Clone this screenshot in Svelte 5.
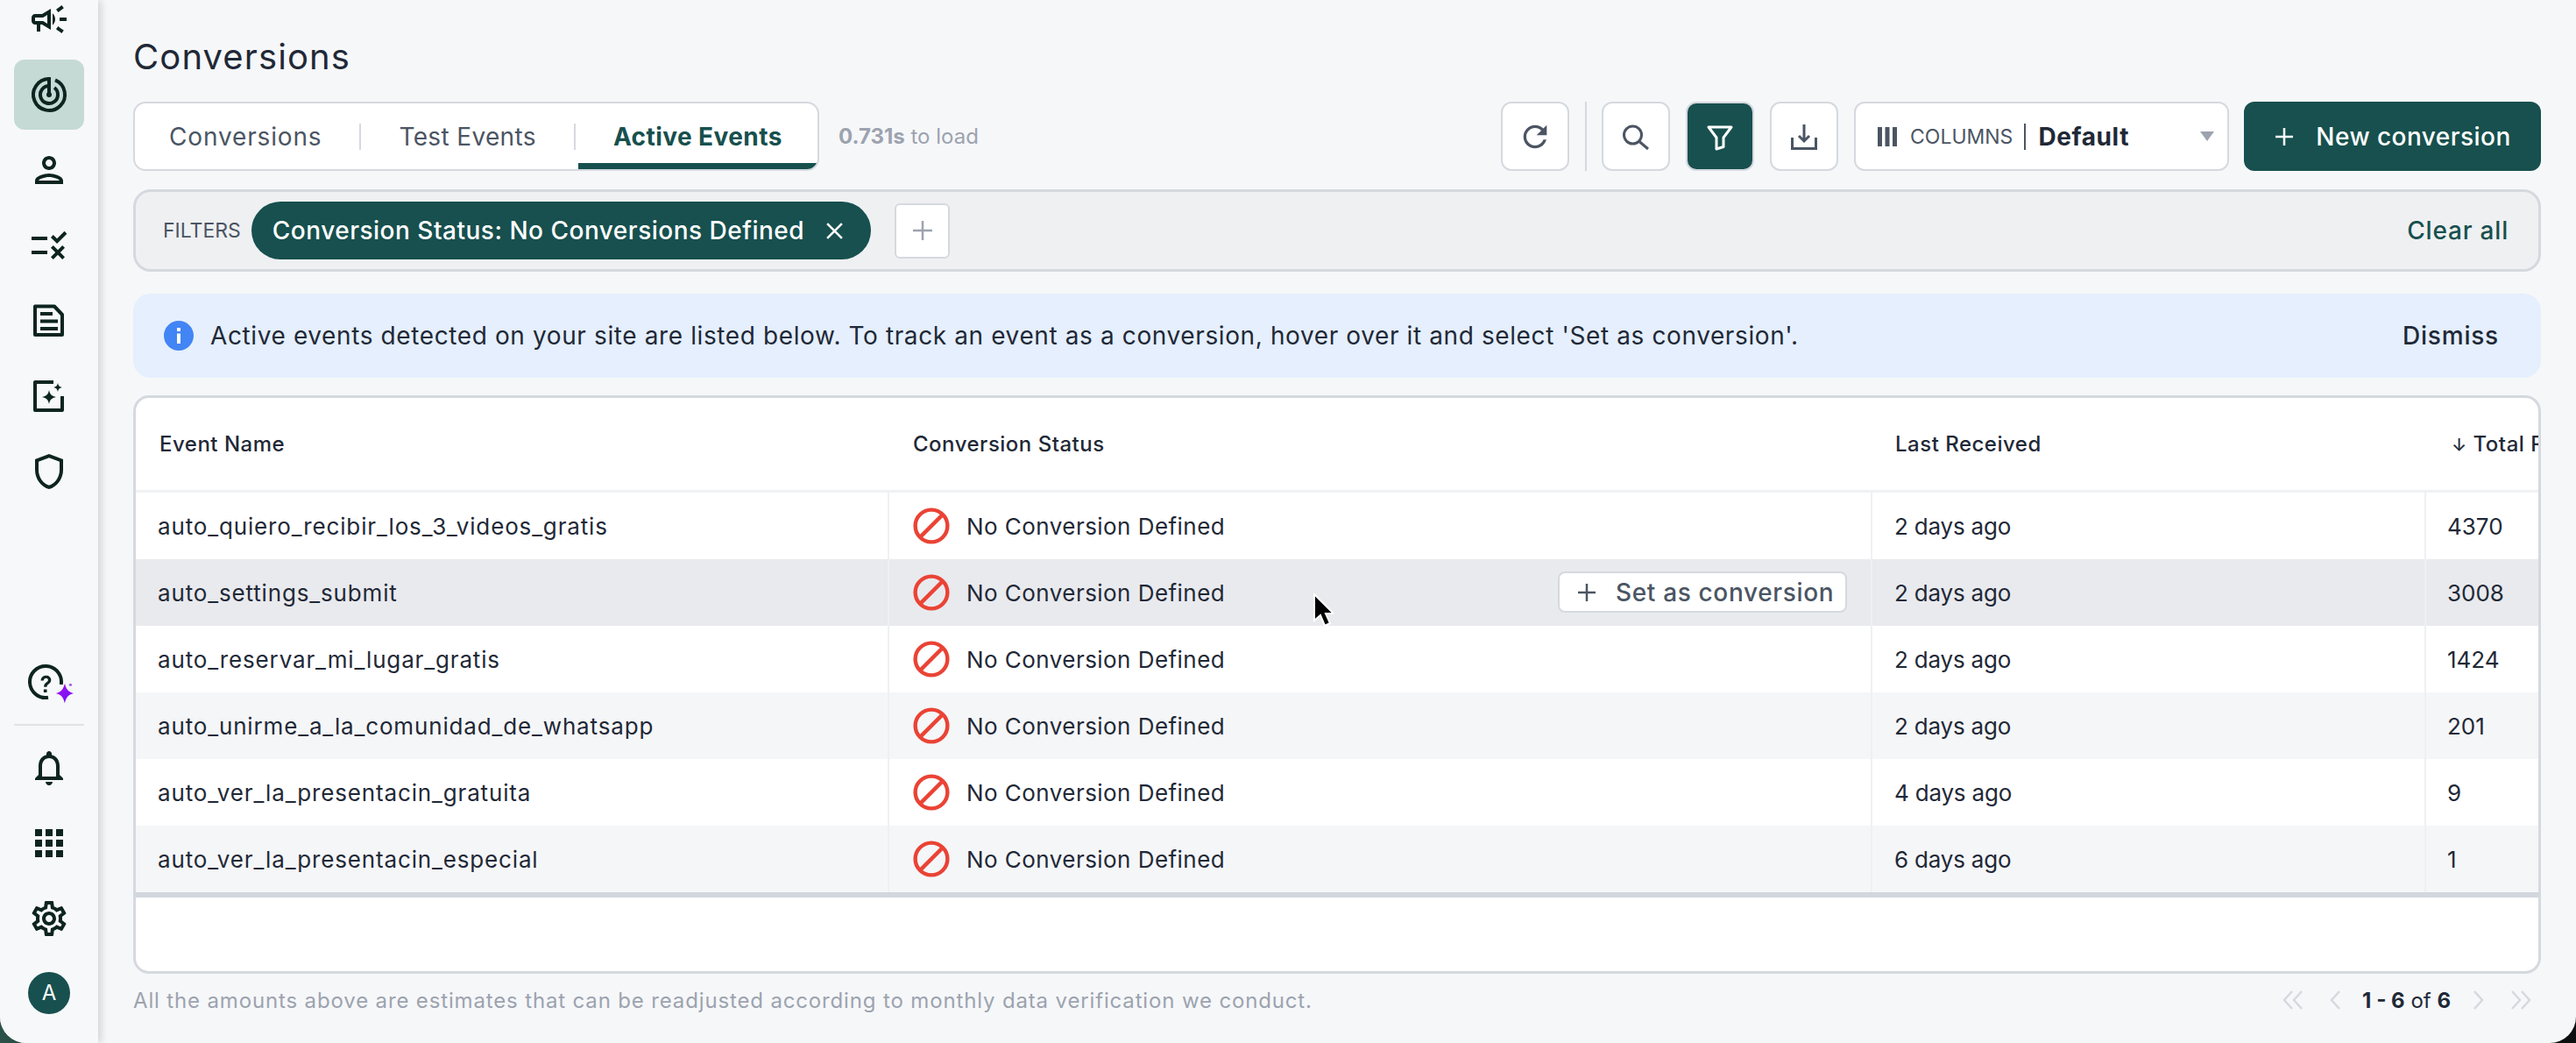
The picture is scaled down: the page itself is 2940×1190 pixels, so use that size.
<script lang="ts">
	const rows = [
		{ name: 'auto_quiero_recibir_los_3_videos_gratis', received: '2 days ago', total: '4370' },
		{ name: 'auto_settings_submit', received: '2 days ago', total: '3008' },
		{ name: 'auto_reservar_mi_lugar_gratis', received: '2 days ago', total: '1424' },
		{ name: 'auto_unirme_a_la_comunidad_de_whatsapp', received: '2 days ago', total: '201' },
		{ name: 'auto_ver_la_presentacin_gratuita', received: '4 days ago', total: '9' },
		{ name: 'auto_ver_la_presentacin_especial', received: '6 days ago', total: '1' }
	];
	const HOVER_ROW = 1;
</script>

<div class="shell">
	<aside class="sidebar">
		<nav class="nav-top">
			<div class="nav-item"><svg viewBox="0 0 24 24" class="nav-icon"><path d="M18 11v2h4v-2h-4zm-2 6.61c.96.71 2.21 1.65 3.2 2.39.4-.53.8-1.07 1.2-1.6-.99-.74-2.24-1.68-3.2-2.4-.4.54-.8 1.08-1.2 1.61zM20.4 5.6c-.4-.53-.8-1.07-1.2-1.6-.99.74-2.24 1.68-3.2 2.4.4.53.8 1.07 1.2 1.6.96-.72 2.21-1.65 3.2-2.4zM4 9c-1.1 0-2 .9-2 2v2c0 1.1.9 2 2 2h1v4h2v-4h1l5 3V6L8 9H4zm5.03 1.71L11 9.53v4.94l-1.97-1.18-.48-.29H4v-2h4.55l.48-.29zM15.5 12c0-1.33-.58-2.53-1.5-3.35v6.69c.92-.81 1.5-2.01 1.5-3.34z" /></svg></div>
			<div class="nav-item active">
				<svg viewBox="0 0 48 48" class="nav-icon stroked" stroke-width="4">
					<path d="M24 6A18 18 0 1 0 31 7.400" />
					<path d="M24 14A10 10 0 1 0 30 16" />
					<path d="M24 4v20" />
					<circle cx="24" cy="24" r="3" class="dot" />
				</svg>
			</div>
			<div class="nav-item"><svg viewBox="0 0 24 24" class="nav-icon"><path d="M12 6c1.1 0 2 .9 2 2s-.9 2-2 2-2-.9-2-2 .9-2 2-2m0 10c2.7 0 5.8 1.29 6 2H6c.23-.72 3.31-2 6-2m0-12C9.79 4 8 5.79 8 8s1.79 4 4 4 4-1.79 4-4-1.79-4-4-4zm0 10c-2.67 0-8 1.34-8 4v2h16v-2c0-2.66-5.33-4-8-4z" /></svg></div>
			<div class="nav-item"><svg viewBox="0 0 24 24" class="nav-icon"><path d="M16.54 11 13 7.46l1.41-1.41 2.12 2.12 4.24-4.24 1.41 1.41L16.54 11zM11 7H2v2h9V7zm10 6.41L19.59 12 17 14.59 14.41 12 13 13.41 15.59 16 13 18.59 14.41 20 17 17.41 19.59 20 21 18.59 18.41 16 21 13.41zM11 15H2v2h9v-2z" /></svg></div>
			<div class="nav-item">
				<svg viewBox="0 0 48 48" class="nav-icon stroked" stroke-width="4">
					<path d="M8 7.500h22L39 17v23H8z" stroke-linejoin="round" />
					<path d="M14 16h14M14 24.500h20M14 33h20" />
				</svg>
			</div>
			<div class="nav-item">
				<svg viewBox="0 0 48 48" class="nav-icon">
					<path class="stroked" stroke-width="4" d="M29 8H8v32h31V24" stroke-linejoin="round" />
					<path d="M24 17c1 5 3 7 8 8-5 1-7 3-8 8-1-5-3-7-8-8 5-1 7-3 8-8zM34 9c.7 3.200 1.800 4.300 5 5-3.200.7-4.300 1.800-5 5-.7-3.200-1.800-4.300-5-5 3.200-.7 4.300-1.800 5-5z" />
				</svg>
			</div>
			<div class="nav-item"><svg viewBox="0 0 24 24" class="nav-icon"><path d="M12 2 4 5v6.090c0 5.050 3.410 9.760 8 10.910 4.590-1.150 8-5.860 8-10.910V5l-8-3zm6 9.090c0 4-2.550 7.700-6 8.830-3.450-1.130-6-4.820-6-8.830v-4.700l6-2.250 6 2.250v4.700z" /></svg></div>
		</nav>

		<div class="nav-bottom">
			<div class="help">
				<svg viewBox="0 0 48 48" class="nav-icon">
					<path class="stroked" stroke-width="4" d="M27 41.750A18 18 0 1 1 41.750 27" />
					<path transform="translate(0 3)" d="M18.500 19.500c.4-3.600 2.900-5.700 6-5.700 3.400 0 5.800 2.100 5.800 5 0 2.200-1 3.300-2.800 4.600-1.500 1.100-2 1.800-2 3.400h-3.400c0-2.700.8-3.900 2.900-5.400 1.400-1 1.900-1.600 1.900-2.600 0-1.200-1-2.100-2.400-2.100s-2.400 1-2.700 2.800zM21.900 29.500h3.600v3.600h-3.600z" />
				</svg>
				<svg viewBox="0 0 24 24" class="spark">
					<defs>
						<linearGradient id="sparkGrad" x1="0" y1="0" x2="1" y2="1">
							<stop offset="0" stop-color="#a813f0" />
							<stop offset="1" stop-color="#6a12f5" />
						</linearGradient>
					</defs>
					<path fill="url(#sparkGrad)" d="M11 1.500c1.500 6 3.500 9 9.500 10.500-6 1.500-8 4.500-9.500 10.500-1.500-6-3.500-9-9.500-10.500 6-1.500 8-4.500 9.500-10.500z" />
					<circle cx="17" cy="3" r="1.500" fill="#a060f0" />
				</svg>
			</div>
			<div class="nav-divider"></div>
			<div class="nav-item"><svg viewBox="0 0 24 24" class="nav-icon"><path d="M12 22c1.100 0 2-.9 2-2h-4c0 1.100.9 2 2 2zm6-6v-5c0-3.070-1.630-5.640-4.500-6.320V4c0-.83-.67-1.500-1.500-1.500s-1.500.67-1.500 1.500v.68C7.640 5.360 6 7.920 6 11v5l-2 2v1h16v-1l-2-2zm-2 1H8v-6c0-2.480 1.510-4.500 4-4.500s4 2.020 4 4.500v6z" /></svg></div>
			<div class="nav-item"><svg viewBox="0 0 24 24" class="nav-icon"><path d="M4 8h4V4H4v4zm6 12h4v-4h-4v4zm-6 0h4v-4H4v4zm0-6h4v-4H4v4zm6 0h4v-4h-4v4zm6-10v4h4V4h-4zm-6 4h4V4h-4v4zm6 6h4v-4h-4v4zm0 6h4v-4h-4v4z" /></svg></div>
			<div class="nav-item"><svg viewBox="0 0 24 24" class="nav-icon"><path d="M19.430 12.980c.04-.32.07-.64.07-.98 0-.34-.03-.66-.07-.98l2.110-1.650c.19-.15.24-.42.12-.64l-2-3.460c-.09-.16-.26-.25-.44-.25-.06 0-.12.01-.17.03l-2.490 1c-.52-.4-1.080-.73-1.690-.98l-.38-2.650C14.460 2.180 14.250 2 14 2h-4c-.25 0-.46.18-.49.42l-.38 2.650c-.61.25-1.170.59-1.690.98l-2.490-1c-.06-.02-.12-.03-.18-.03-.17 0-.34.09-.43.25l-2 3.460c-.13.22-.07.49.12.64l2.110 1.650c-.04.32-.07.65-.07.98 0 .33.03.66.07.98l-2.110 1.650c-.19.15-.24.42-.12.64l2 3.460c.09.16.26.25.44.25.06 0 .12-.01.17-.03l2.490-1c.52.4 1.080.73 1.690.98l.38 2.650c.03.24.24.42.49.42h4c.25 0 .46-.18.49-.42l.38-2.650c.61-.25 1.170-.59 1.690-.98l2.490 1c.06.02.12.03.18.03.17 0 .34-.09.43-.25l2-3.460c.12-.22.07-.49-.12-.64l-2.110-1.650zm-1.980-1.710c.04.31.05.52.05.73 0 .21-.02.43-.05.73l-.14 1.130.89.7 1.080.84-.7 1.210-1.270-.51-1.040-.42-.9.68c-.43.32-.84.56-1.250.73l-1.060.43-.16 1.130-.2 1.350h-1.400l-.19-1.350-.16-1.130-1.060-.43c-.43-.18-.83-.41-1.230-.71l-.91-.7-1.060.43-1.270.51-.7-1.210 1.080-.84.89-.7-.14-1.130c-.03-.31-.05-.54-.05-.74s.02-.43.05-.73l.14-1.130-.89-.7-1.080-.84.7-1.210 1.270.51 1.040.42.9-.68c.43-.32.84-.56 1.250-.73l1.060-.43.16-1.130.2-1.350h1.390l.19 1.350.16 1.130 1.060.43c.43.18.83.41 1.230.71l.91.7 1.060-.43 1.270-.51.7 1.210-1.070.85-.89.7.14 1.130zM12 8c-2.210 0-4 1.790-4 4s1.790 4 4 4 4-1.790 4-4-1.790-4-4-4zm0 6c-1.100 0-2-.9-2-2s.9-2 2-2 2 .9 2 2-.9 2-2 2z" /></svg></div>
			<div class="avatar">A</div>
		</div>
	</aside>

	<main class="content">
		<h1 class="title">Conversions</h1>

		<div class="toolbar">
			<div class="tabs">
				<span class="tab tab-first">Conversions</span>
				<span class="tab-sep"></span>
				<span class="tab tab-second">Test Events</span>
				<span class="tab-sep"></span>
				<span class="tab tab-active">Active Events</span>
			</div>
			<span class="load-time"><b>0.731s</b> to load</span>
			<div class="spacer"></div>
			<button class="tool-btn">
				<svg viewBox="0 0 24 24" class="refresh"><path d="M17.650 6.350C16.200 4.900 14.210 4 12 4c-4.420 0-7.990 3.580-7.990 8s3.570 8 7.990 8c3.730 0 6.840-2.550 7.730-6h-2.080c-.82 2.330-3.040 4-5.650 4-3.310 0-6-2.690-6-6s2.690-6 6-6c1.660 0 3.140.69 4.220 1.780L13 11h7V4l-2.350 2.350z" /></svg>
			</button>
			<span class="tool-sep"></span>
			<button class="tool-btn">
				<svg viewBox="0 0 36 36" class="tool-icon"><circle cx="14.500" cy="16" r="10" /><path d="m22 23.500 10 8.500" /></svg>
			</button>
			<button class="tool-btn on">
				<svg viewBox="0 0 36 36" class="tool-icon"><path d="M5 7h26L22 19v10.500L14 32V19z" stroke-linejoin="round" /></svg>
			</button>
			<button class="tool-btn">
				<svg viewBox="0 0 36 36" class="tool-icon"><path d="M18 4v19M12 17l6 6 6-6M4.500 19v12.500h27V19" /></svg>
			</button>
			<div class="columns-select">
				<svg viewBox="0 0 28 28" class="bars"><path d="M3 3h5v22H3zM11.500 3h5v22h-5zM20 3h5v22h-5z" /></svg>
				<span class="columns-label">COLUMNS</span>
				<span class="columns-bar"></span>
				<span class="columns-value">Default</span>
				<span class="caret"></span>
			</div>
			<button class="primary-btn">
				<svg viewBox="0 0 24 24" class="plus"><path d="M12 2v20M2 12h20" /></svg>
				New conversion
			</button>
		</div>

		<div class="filters">
			<span class="filters-label">FILTERS</span>
			<span class="pill">
				Conversion Status: No Conversions Defined
				<svg viewBox="0 0 20 20" class="pill-x"><path d="m2 2 16 16M18 2 2 18" /></svg>
			</span>
			<button class="add-filter"><svg viewBox="0 0 24 24" class="plus"><path d="M12 1v22M1 12h22" /></svg></button>
			<div class="spacer"></div>
			<span class="clear-all">Clear all</span>
		</div>

		<div class="banner">
			<svg viewBox="0 0 34 34" class="info"><circle cx="17" cy="17" r="17" fill="#4285f4" /><path d="M15 14.500h4V26h-4zM15 8h4v4h-4z" fill="#fff" /></svg>
			<span class="banner-text">Active events detected on your site are listed below. To track an event as a conversion, hover over it and select 'Set as conversion'.</span>
			<div class="spacer"></div>
			<span class="dismiss">Dismiss</span>
		</div>

		<div class="table">
			<div class="thead">
				<div class="th th-name">Event Name</div>
				<div class="th th-status">Conversion Status</div>
				<div class="th">Last Received</div>
				<div class="th th-total"><span class="sort">↓</span> Total Responses</div>
			</div>
			{#each rows as row, i}
				<div class="tr" class:alt={i % 2 === 1} class:hover={i === HOVER_ROW}>
					<div class="td td-name">{row.name}</div>
					<div class="td status">
						<svg viewBox="0 0 40 40" class="no-icon"><circle cx="20" cy="20" r="17.500" /><path d="M8 32 32 8" /></svg>
						<span class="status-text">No Conversion Defined</span>
						{#if i === HOVER_ROW}
							<button class="set-btn">
								<svg viewBox="0 0 24 24" class="plus"><path d="M12 2v20M2 12h20" /></svg>
								Set as conversion
							</button>
						{/if}
					</div>
					<div class="td td-received">{row.received}</div>
					<div class="td td-total">{row.total}</div>
				</div>
			{/each}
			<div class="tfoot-line"></div>
		</div>

		<div class="footer">
			<span class="note">All the amounts above are estimates that can be readjusted according to monthly data verification we conduct.</span>
			<div class="spacer"></div>
			<svg viewBox="0 0 24 24" class="chev first"><path d="M11 2 2 12l9 10M22 2l-9 10 9 10" /></svg>
			<svg viewBox="0 0 24 24" class="chev prev"><path d="M17 2l-9 10 9 10" /></svg>
			<span class="range"><b>1 - 6</b> of <b>6</b></span>
			<svg viewBox="0 0 24 24" class="chev next"><path d="m7 2 9 10-9 10" /></svg>
			<svg viewBox="0 0 24 24" class="chev last"><path d="m2 2 9 10-9 10M13 2l9 10-9 10" /></svg>
		</div>

		<svg viewBox="0 0 24 40" class="cursor"><path d="M2 1v30l7-6 5 12 6-3-5-11h9z" fill="#000" stroke="#fff" stroke-width="2" /></svg>
	</main>
</div>

<style>
	:global(body) {
		margin: 0;
		background: linear-gradient(90deg, #2c5249 0, #1a2a27 6%, #0d0f0f 100%);
	}

	.shell {
		display: flex;
		position: relative;
		width: 2940px;
		height: 1190px;
		overflow: hidden;
		border-radius: 0 0 30px 30px;
		background: #f6f7f9;
		font-family: Inter, 'Liberation Sans', sans-serif;
		color: #1f2937;
	}

	/* Sidebar */
	.sidebar {
		flex: 0 0 112px;
		display: flex;
		flex-direction: column;
		justify-content: space-between;
		background: #f7f8fa;
		box-shadow: 4px 0 8px rgba(0, 0, 0, 0.13);
		z-index: 1;
		padding-bottom: 33px;
		box-sizing: border-box;
	}

	.nav-top {
		display: flex;
		flex-direction: column;
		align-items: center;
		gap: 6px;
		margin-top: -18px;
	}

	.nav-bottom {
		display: flex;
		flex-direction: column;
		align-items: center;
		gap: 6px;
	}

	.nav-item {
		width: 80px;
		height: 80px;
		display: flex;
		align-items: center;
		justify-content: center;
		border-radius: 12px;
	}

	.nav-item.active {
		background: #c5dad5;
	}

	.nav-icon {
		width: 48px;
		height: 48px;
		fill: #0d2420;
	}

	.stroked {
		fill: none;
		stroke: #0d2420;
	}

	.dot {
		fill: #0d2420;
		stroke: none;
	}

	.help {
		position: relative;
		width: 80px;
		height: 60px;
		display: flex;
		align-items: center;
		justify-content: center;
		margin-left: -8px;
	}

	.spark {
		position: absolute;
		left: 50px;
		top: 30px;
		width: 26px;
		height: 26px;
	}

	.nav-divider {
		width: 80px;
		height: 2px;
		background: #e0e2e5;
		margin: 12px 0 2px;
	}

	.avatar {
		width: 48px;
		height: 48px;
		margin-top: 15px;
		border-radius: 50%;
		background: #17504e;
		color: #fff;
		font-size: 24px;
		line-height: 48px;
		text-align: center;
	}

	/* Main */
	.content {
		position: relative;
		flex: 1;
		min-width: 0;
		padding: 0 40px;
		box-sizing: border-box;
	}

	.title {
		margin: 0;
		height: 116px;
		padding-top: 44px;
		box-sizing: border-box;
		font-size: 40px;
		font-weight: 400;
		line-height: 42px;
		letter-spacing: 1.1px;
		color: #1f2937;
	}

	.spacer {
		flex: 1;
	}

	.toolbar {
		display: flex;
		align-items: stretch;
		height: 79px;
	}

	.tabs {
		display: flex;
		align-items: center;
		width: 783px;
		box-sizing: border-box;
		background: #fff;
		border: 2px solid #d5d9df;
		border-radius: 14px;
		position: relative;
		overflow: hidden;
		font-size: 28px;
		color: #4b5563;
	}

	.tab-first {
		margin-left: 39px;
		letter-spacing: 0.85px;
	}

	.tab-second {
		letter-spacing: 0.35px;
	}

	.tab-sep {
		width: 2px;
		height: 30px;
		background: #d5d9df;
		margin: 0 43px;
	}

	.tab-active {
		font-weight: 700;
		color: #17504e;
		letter-spacing: 0.43px;
	}

	.tabs::after {
		content: '';
		position: absolute;
		left: 506px;
		right: 0;
		bottom: 0;
		height: 7px;
		background: #17504e;
	}

	.load-time {
		align-self: center;
		margin-left: 22px;
		font-size: 24px;
		color: #9ca3af;
	}

	.tool-btn {
		width: 78px;
		padding: 0;
		display: flex;
		align-items: center;
		justify-content: center;
		background: #fff;
		border: 2px solid #d5d9df;
		border-radius: 12px;
		margin-right: 18px;
	}

	.tool-btn.on {
		background: #17504e;
	}

	.tool-icon {
		width: 36px;
		height: 36px;
		fill: none;
		stroke: #4b5563;
		stroke-width: 3;
	}

	.refresh {
		width: 40px;
		height: 40px;
		fill: #4b5563;
	}

	.tool-btn.on .tool-icon {
		stroke: #fff;
	}

	.tool-sep {
		width: 2px;
		background: #d5d9df;
		margin-right: 17px;
	}

	.columns-select {
		display: flex;
		align-items: center;
		width: 428px;
		box-sizing: border-box;
		background: #fff;
		border: 2px solid #d5d9df;
		border-radius: 12px;
		padding: 0 15px 0 22px;
	}

	.bars {
		width: 28px;
		height: 28px;
		fill: #4b5563;
	}

	.columns-label {
		margin-left: 12px;
		font-size: 23px;
		color: #4b5563;
	}

	.columns-bar {
		width: 2px;
		height: 30px;
		margin: 0 14px 0 13px;
		background: #4b5563;
	}

	.columns-value {
		font-size: 28px;
		font-weight: 700;
		letter-spacing: 0.6px;
		color: #1f2937;
	}

	.caret {
		margin-left: auto;
		border: 8px solid transparent;
		border-top: 11px solid #9ca3af;
		border-bottom: 0;
	}

	.primary-btn {
		width: 339px;
		margin-left: 17px;
		display: flex;
		align-items: center;
		justify-content: center;
		gap: 24px;
		padding: 0;
		background: #17504e;
		border: 0;
		border-radius: 12px;
		color: #fff;
		font-family: inherit;
		font-size: 28px;
		font-weight: 500;
		letter-spacing: 0.45px;
	}

	.plus {
		width: 24px;
		height: 24px;
		fill: none;
		stroke: currentColor;
		stroke-width: 2.5;
	}

	.filters {
		display: flex;
		align-items: center;
		height: 94px;
		margin-top: 21px;
		padding: 0 34px 0 31px;
		box-sizing: border-box;
		background: #eff0f2;
		border: 3px solid #d5d9df;
		border-radius: 20px;
	}

	.filters-label {
		font-size: 23px;
		color: #4b5563;
	}

	.pill {
		display: flex;
		align-items: center;
		height: 66px;
		margin-left: 12px;
		padding: 0 31px 0 24px;
		border-radius: 33px;
		background: #17504e;
		color: #fff;
		font-size: 28px;
		font-weight: 500;
		letter-spacing: 0.5px;
		white-space: nowrap;
	}

	.pill-x {
		width: 21px;
		height: 21px;
		margin-left: 24px;
		fill: none;
		stroke: #fff;
		stroke-width: 2.5;
	}

	.add-filter {
		width: 63px;
		height: 63px;
		margin-left: 27px;
		padding: 0;
		display: flex;
		align-items: center;
		justify-content: center;
		background: #fff;
		border: 2px solid #d5d9df;
		border-radius: 6px;
		color: #9ca3af;
	}

	.clear-all {
		font-size: 28px;
		font-weight: 500;
		letter-spacing: 0.8px;
		color: #17504e;
	}

	.banner {
		display: flex;
		align-items: center;
		height: 96px;
		margin-top: 25px;
		padding: 0 48px 0 35px;
		background: #e5effd;
		border-radius: 20px;
		font-size: 28px;
		letter-spacing: 0.61px;
		color: #1f2937;
	}

	.info {
		width: 34px;
		height: 34px;
		margin-right: 19px;
	}

	.dismiss {
		font-weight: 500;
		letter-spacing: 0.8px;
	}

	/* Table */
	.table {
		height: 660px;
		margin-top: 20px;
		box-sizing: border-box;
		background: #fff;
		border: 3px solid #d5d9df;
		border-radius: 18px;
		overflow: hidden;
	}

	.thead,
	.tr {
		display: grid;
		grid-template-columns: 858px 1122px 632px 300px;
	}

	.thead {
		height: 108px;
		align-items: center;
		border-bottom: 3px solid #f0f1f3;
		box-sizing: border-box;
	}

	.th {
		padding-left: 28px;
		font-size: 24px;
		color: #1f2937;
		white-space: nowrap;
		font-weight: 500;
		letter-spacing: 0.5px;
	}

	.th-name {
		padding-left: 27px;
	}

	.th-status {
		padding-left: 29px;
	}

	.th-total {
		padding-left: 31px;
	}

	.sort {
		font-size: 20px;
	}

	.tr {
		height: 76px;
		font-size: 26px;
		color: #1f2937;
	}

	.tr.alt {
		background: #f5f6f8;
	}

	.tr.hover {
		background: #e9eaee;
	}

	.td {
		display: flex;
		align-items: center;
		padding-left: 27px;
		border-left: 2px solid #eff0f2;
		box-sizing: border-box;
		white-space: nowrap;
	}

	.td-name {
		padding-left: 25px;
		border-left: 0;
		letter-spacing: 0.85px;
	}

	.td-received {
		padding-left: 25px;
		letter-spacing: -0.2px;
	}

	.td-total {
		padding-left: 24px;
	}

	.status {
		position: relative;
	}

	.status-text {
		letter-spacing: 0.45px;
	}

	.no-icon {
		width: 42px;
		height: 42px;
		margin-right: 19px;
		fill: none;
		stroke: #ea4335;
		stroke-width: 4.2;
	}

	.set-btn {
		position: absolute;
		right: 27px;
		top: 14px;
		width: 330px;
		height: 47px;
		display: flex;
		align-items: center;
		gap: 21px;
		padding: 0 0 0 19px;
		background: #fff;
		border: 2px solid #d5d9df;
		border-radius: 8px;
		color: #4b5563;
		font-family: inherit;
		font-size: 28px;
		font-weight: 500;
		letter-spacing: 0.65px;
		white-space: nowrap;
	}

	.tfoot-line {
		height: 6px;
		background: #d2d7de;
	}

	.footer {
		display: flex;
		align-items: center;
		height: 58px;
		padding-top: 2px;
		box-sizing: border-box;
	}

	.note {
		font-size: 24px;
		letter-spacing: 0.85px;
		color: #9ca3af;
	}

	.range {
		font-size: 24px;
		color: #1f2937;
		margin: 0 20px 0 19px;
	}

	.chev {
		width: 24px;
		height: 24px;
		fill: none;
		stroke: #d5d9df;
		stroke-width: 2.5;
	}

	.chev.first {
		margin-right: 24px;
	}

	.chev.last {
		margin-left: 24px;
		margin-right: 11px;
	}

	.cursor {
		position: absolute;
		left: 1386px;
		top: 677px;
		width: 24px;
		height: 40px;
	}
</style>
